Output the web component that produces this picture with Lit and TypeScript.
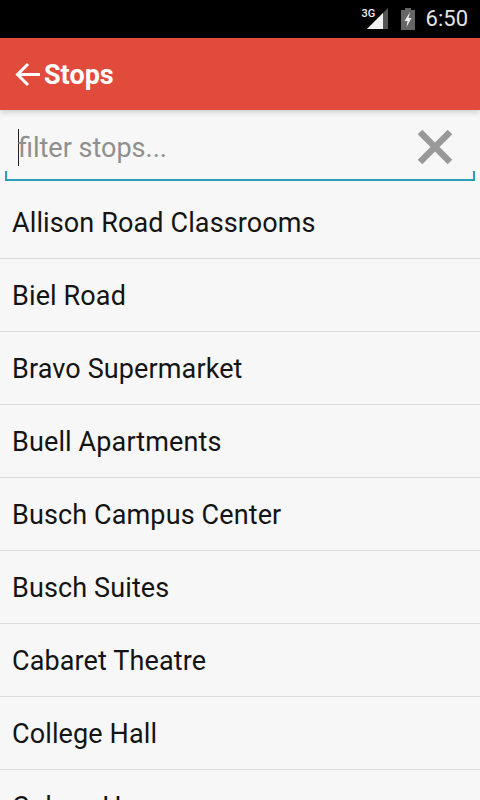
import { LitElement, html, css } from "lit";
import { customElement } from "lit/decorators.js";

const STOPS = [
  "Allison Road Classrooms",
  "Biel Road",
  "Bravo Supermarket",
  "Buell Apartments",
  "Busch Campus Center",
  "Busch Suites",
  "Cabaret Theatre",
  "College Hall",
  "Colony House",
];

@customElement("app-root")
export class AppRoot extends LitElement {
  static styles = css`
    :host {
      display: block;
      width: 480px;
      height: 800px;
      overflow: hidden;
      background: #f7f7f7;
      font-family: Roboto, "Liberation Sans", sans-serif;
    }
    .status {
      height: 38px;
      background: #000;
      display: flex;
      align-items: center;
      justify-content: flex-end;
      box-sizing: border-box;
      padding-right: 12px;
      color: #e6e6e6;
    }
    .net {
      position: relative;
      width: 26px;
      height: 22px;
      margin-right: 13px;
    }
    .net svg { display: block; position: absolute; left: 5px; top: 0; }
    .net span {
      position: absolute;
      left: 0;
      top: 0;
      font-size: 11px;
      font-weight: 500;
      line-height: 12px;
      color: #f0f0f0;
    }
    .battery { display: block; margin-right: 11px; }
    .time { font-size: 22px; line-height: 24px; color: #e4e4e4; }
    .bar {
      height: 72px;
      background: #e14b3b;
      display: flex;
      align-items: center;
      box-sizing: border-box;
      padding-left: 15px;
      gap: 4px;
      color: #fff;
      box-shadow: 0 2px 6px rgba(0, 0, 0, 0.18);
      position: relative;
    }
    .bar svg { display: block; }
    .bar h1 {
      margin: 0;
      padding-top: 2px;
      font-size: 27px;
      font-weight: 700;
      line-height: 30px;
    }
    .filter {
      height: 71px;
      margin: 0 5px;
      box-sizing: border-box;
      display: flex;
      align-items: center;
      padding: 5px 22px 0 13px;
      border-bottom: 2px solid #2a9fb8;
      position: relative;
    }
    .filter::before,
    .filter::after {
      content: "";
      position: absolute;
      bottom: 0;
      width: 2px;
      height: 8px;
      background: #2a9fb8;
    }
    .filter::before { left: 0; }
    .filter::after { right: 0; }
    .caret {
      width: 1px;
      height: 37px;
      background: #222;
      margin-right: -1px;
    }
    .placeholder {
      flex: 1;
      font-size: 27px;
      color: #8f8f8f;
      line-height: 37px;
      padding-top: 3px;
    }
    .list { margin-top: 5px; }
    .row {
      height: 73px;
      box-sizing: border-box;
      border-bottom: 1px solid #dcdcdc;
      padding: 2px 0 0 12px;
      display: flex;
      align-items: center;
      font-size: 27px;
      letter-spacing: 0.12px;
      color: #141414;
    }
  `;

  render() {
    return html`
      <div class="status">
        <div class="net">
          <span>3G</span>
          <svg width="21" height="21" viewBox="0 0 21 21">
            <path d="M21 0V21H0Z" fill="#555" />
            <path d="M16 5V21H0Z" fill="#f2f2f2" />
          </svg>
        </div>
        <svg class="battery" width="14" height="22" viewBox="0 0 14 22">
          <path d="M4 0H10V2H14V22H0V2H4Z" fill="#666" />
          <path d="M9 4L3.5 13H6.5L5.5 19L10.5 10H7.5Z" fill="#eee" />
        </svg>
        <div class="time">6:50</div>
      </div>
      <div class="bar">
        <svg width="25" height="25" viewBox="0 0 25 25" fill="none" stroke="#fff" stroke-width="3">
          <path d="M25 12.5H3M13 2L2.5 12.5L13 23" />
        </svg>
        <h1>Stops</h1>
      </div>
      <div class="filter">
        <div class="caret"></div>
        <div class="placeholder">filter stops...</div>
        <svg width="36" height="36" viewBox="0 0 36 36" stroke="#999" stroke-width="6.5">
          <path d="M3 3L33 33M33 3L3 33" />
        </svg>
      </div>
      <div class="list">
        ${STOPS.map((s) => html`<div class="row">${s}</div>`)}
      </div>
    `;
  }
}
